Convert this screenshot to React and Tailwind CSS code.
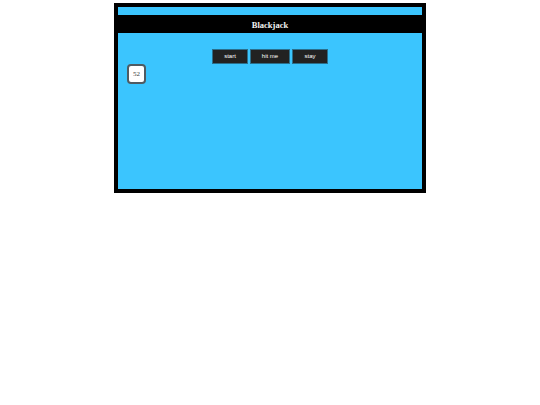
import { useState } from 'react';

// simple blackjack table: header, control buttons and the deck counter
export default function App() {
  const [deck] = useState(52);

  return (
    <div className="w-[312px] mx-auto mt-[3px] bg-black p-[4px]">
      <div className="h-[8px] bg-[#3bc5fe]" />
      <div className="h-[18px] pt-[2px] flex items-center justify-center text-[#f4f4f4] font-bold text-[8.5px] font-['Liberation_Serif',serif]">
        Blackjack
      </div>
      <div className="h-[156px] bg-[#3bc5fe]">
        <div className="flex justify-center gap-[2px] pt-[16px]">
          {['start', 'hit me', 'stay'].map((label, i) => (
            <button
              key={label}
              className={`h-[15px] ${i === 1 ? 'w-[40px]' : 'w-[36px]'} bg-[#222222] border border-[#2a6f8c] text-white text-[6px] font-['Liberation_Sans',sans-serif]`}
            >
              {label}
            </button>
          ))}
        </div>
        <div className="ml-[9px] w-[19px] h-[20px] rounded-[4px] border-2 border-[#4f5b62] bg-white flex items-center justify-center text-[7px] text-[#3a3a3a] font-['Liberation_Serif',serif]">
          {deck}
        </div>
      </div>
    </div>
  );
}
